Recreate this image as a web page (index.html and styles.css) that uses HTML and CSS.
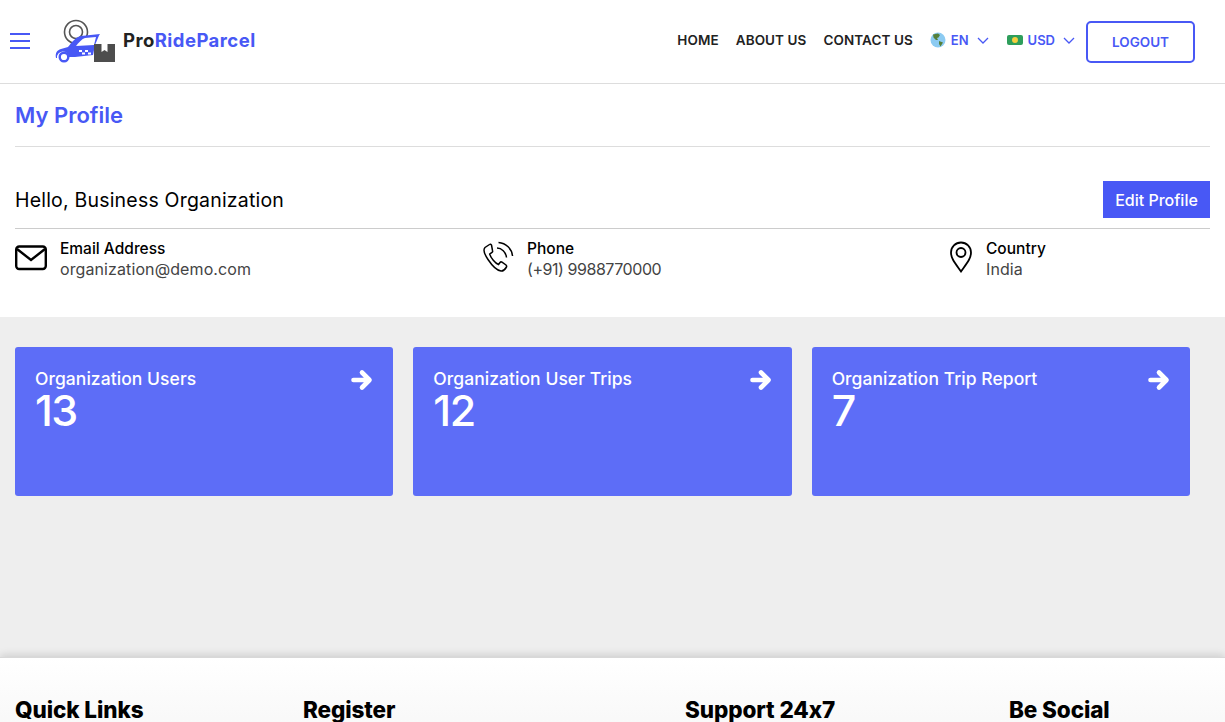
FILE: index.html
```html
<!DOCTYPE html>
<html lang="en">
<head>
<meta charset="utf-8">
<title>My Profile</title>
<link rel="stylesheet" href="styles.css">
</head>
<body>
<header class="topbar">
  <button class="burger" aria-label="Menu"><span></span><span></span><span></span></button>
  <a class="brand">
    <svg class="logo" width="62" height="50" viewBox="0 0 62 50">
      <g fill="none" stroke="#555" stroke-width="1.6"><circle cx="21" cy="15" r="11.500"/><circle cx="21" cy="15" r="6.500"/></g>
      <path d="M1 41C0 36 2 33 6 32l7-2c4-5 8-10 13-11l19-2-1 1.500-4 9.500-2 10-18 2h-6a6 6 0 0 0-12 1z" fill="#4858f5"/>
      <path d="M21 29c3-4 6-7 9-8l11-1-2 8z" fill="#fff"/>
      <circle cx="9" cy="40" r="4.300" fill="#fff" stroke="#4858f5" stroke-width="2.400"/>
      <path d="M24 33h3v2h-3zM30 33h3v2h-3zM27 35.500h3v2h-3zM33 35.500h3v2h-3z" fill="#fff"/>
      <rect x="39" y="27" width="21" height="18" fill="#4d4d4d"/>
      <path d="M46.500 27h6v8l-3-2-3 2z" fill="#fff"/>
    </svg>
    <span class="brand-name">Pro<em>RideParcel</em></span>
  </a>
  <nav class="nav">
    <a>HOME</a>
    <a>ABOUT US</a>
    <a>CONTACT US</a>
    <span class="pick">
      <svg width="16" height="16" viewBox="0 0 16 16"><circle cx="8" cy="8" r="7.500" fill="#8ccbf2"/><path d="M3 2.500 8 1.500l2 1.500-1.500 2.500-1.500.5L8 8 6 8 3.500 5.500zM9 9l4 1.500-2.500 4L9 12z" fill="#55803a"/></svg>
      <b>EN</b>
      <svg class="chev" width="12" height="7" viewBox="0 0 12 7"><path d="M1 1l5 5 5-5" fill="none" stroke="#4858f5" stroke-width="1.300"/></svg>
    </span>
    <span class="pick">
      <svg width="16" height="10" viewBox="0 0 16 10"><rect width="16" height="10" rx="2" fill="#2e9e5b"/><circle cx="8" cy="5" r="3" fill="#f5cf3e"/></svg>
      <b>USD</b>
      <svg class="chev" width="12" height="7" viewBox="0 0 12 7"><path d="M1 1l5 5 5-5" fill="none" stroke="#4858f5" stroke-width="1.300"/></svg>
    </span>
    <button class="logout">LOGOUT</button>
  </nav>
</header>

<main>
  <section class="profile">
    <h1 class="page-title">My Profile</h1>
    <div class="hello-row">
      <h2 class="hello">Hello, Business Organization</h2>
      <button class="edit">Edit Profile</button>
    </div>
    <div class="info-row">
      <div class="info">
        <svg class="info-icon" width="32" height="26" viewBox="0 0 32 26"><rect x="1.200" y="1.500" width="29.600" height="22.500" rx="3" fill="none" stroke="#000" stroke-width="2.400"/><path d="M2 4l14 11L30 4" fill="none" stroke="#000" stroke-width="2.400"/></svg>
        <div><div class="info-label">Email Address</div><div class="info-value">organization@demo.com</div></div>
      </div>
      <div class="info">
        <svg class="info-icon tall" width="32" height="32" viewBox="0 0 32 32"><path d="M7.500 3.500 3 6.500c-2 2-1 6 3 12s9 11 13 11.500c2 .3 4-1.500 5.500-4 .4-.8 0-1.500-.5-2l-4-2.800c-.8-.5-1.500-.3-2 .3l-1.500 2c-3-1-8-7-8.800-10.500l2.300-1.500c.7-.5.8-1.200.5-2L9.500 4c-.4-.7-1.300-1-2-.5z" fill="none" stroke="#000" stroke-width="1.500"/><path d="M15 7c4.500 0 9 4 9.500 9.500M16.500 1.500C24 2 30 8 30.500 15" fill="none" stroke="#000" stroke-width="1.500"/></svg>
        <div><div class="info-label">Phone</div><div class="info-value phone">(+91) 9988770000</div></div>
      </div>
      <div class="info info-country">
        <svg class="info-icon tall" width="24" height="32" viewBox="0 0 24 32"><path d="M12 30.500C6 22 2 17.500 2 11.500a10 10 0 0 1 20 0C22 17.500 18 22 12 30.500z" fill="none" stroke="#000" stroke-width="1.800"/><circle cx="12" cy="11.500" r="4.500" fill="none" stroke="#000" stroke-width="1.800"/></svg>
        <div><div class="info-label">Country</div><div class="info-value">India</div></div>
      </div>
    </div>
  </section>

  <section class="stats">
    <div class="stat-cell"><article class="card"><div class="card-top"><span class="card-name">Organization Users</span><svg class="arrow" width="22" height="22" viewBox="0 0 22 22"><path d="M2.500 11h15M11 3.500l7.500 7.500-7.500 7.500" fill="none" stroke="#fff" stroke-width="4.600" stroke-linecap="round" stroke-linejoin="round"/></svg></div><div class="card-num">13</div></article></div>
    <div class="stat-cell"><article class="card"><div class="card-top"><span class="card-name">Organization User Trips</span><svg class="arrow" width="22" height="22" viewBox="0 0 22 22"><path d="M2.500 11h15M11 3.500l7.500 7.500-7.500 7.500" fill="none" stroke="#fff" stroke-width="4.600" stroke-linecap="round" stroke-linejoin="round"/></svg></div><div class="card-num">12</div></article></div>
    <div class="stat-cell"><article class="card"><div class="card-top"><span class="card-name">Organization Trip Report</span><svg class="arrow" width="22" height="22" viewBox="0 0 22 22"><path d="M2.500 11h15M11 3.500l7.500 7.500-7.500 7.500" fill="none" stroke="#fff" stroke-width="4.600" stroke-linecap="round" stroke-linejoin="round"/></svg></div><div class="card-num">7</div></article></div>
  </section>
</main>

<footer class="footer">
  <h3>Quick Links</h3>
  <h3>Register</h3>
  <h3>Support 24x7</h3>
  <h3>Be Social</h3>
</footer>
</body>
</html>
```
FILE: styles.css
```css
* { box-sizing: border-box; }
html, body { margin: 0; height: 722px; overflow: hidden; }
body { font-family: Inter, "Liberation Sans", sans-serif; background: #fff; color: #000; }
h1, h2, h3 { margin: 0; }
button { font-family: inherit; cursor: pointer; }

.topbar { height: 84px; border-bottom: 1px solid #ddd; display: flex; align-items: center; padding: 0 30px 3px 10px; }
.burger { width: 20px; height: 16px; padding: 0; border: 0; background: none; display: flex; flex-direction: column; justify-content: space-between; margin-top: 2px; }
.burger span { display: block; height: 2px; background: #4858f5; }
.brand { display: flex; align-items: center; margin-left: 25px; }
.logo { display: block; margin-top: 3px; }
.brand-name { font-size: 18.500px; font-weight: 700; color: #222; margin-left: 6px; letter-spacing: .45px; }
.brand-name em { font-style: normal; color: #4858f5; }
.nav { margin-left: auto; display: flex; align-items: center; font-size: 13.500px; font-weight: 600; color: #222; }
.nav > a { margin-right: 17px; letter-spacing: .08px; }
.pick { display: flex; align-items: center; color: #4858f5; margin-right: 18px; font-size: 13px; }
.pick b { font-weight: 600; margin-left: 5px; }
.chev { margin-left: 8px; }
.pick + .pick { margin-right: 11px; }
.logout { width: 109px; height: 42px; border: 2px solid #4858f5; border-radius: 5px; background: #fff; color: #4858f5; font-size: 13.500px; font-weight: 600; margin-top: 4px; }

.profile { height: 233px; padding: 0 15px; background: #fff; }
.page-title { height: 63px; line-height: 63px; border-bottom: 1px solid #ddd; color: #4858f5; font-size: 22px; font-weight: 600; }
.hello-row { height: 82px; display: flex; align-items: center; justify-content: space-between; padding-top: 24px; border-bottom: 1px solid #ccc; }
.hello { font-size: 19.500px; font-weight: 400; letter-spacing: .2px; }
.edit { width: 107px; height: 37px; border: 0; background: #4858f5; color: #fff; font-size: 16px; font-weight: 500; padding: 0; }
.info-row { display: grid; grid-template-columns: 467px 467px 1fr; padding-top: 9px; }
.info { display: flex; align-items: flex-start; }
.info-icon { flex: none; margin-top: 7px; margin-right: 13px; }
.info-icon.tall { margin-top: 3px; }
.info-label { font-size: 15.500px; font-weight: 500; line-height: 21px; }
.info-value { font-size: 16px; color: #444; line-height: 21px; letter-spacing: .1px; }
.info-value.phone { letter-spacing: -.45px; }

.stats { height: 340px; background: #eee; padding: 30px 15px 0; display: grid; grid-template-columns: repeat(3, 398.330px); align-items: start; }
.stat-cell { padding-right: 20px; }
.card { height: 149px; background: #5d6df7; border-radius: 3px; padding: 20px; color: #fff; }
.card-top { display: flex; justify-content: space-between; align-items: center; height: 22px; }
.card-name { font-size: 17.500px; font-weight: 500; letter-spacing: .05px; }
.card-num { font-size: 43px; line-height: 44px; font-weight: 500; letter-spacing: -1.500px; margin-top: -1px; }
.arrow { display: block; margin-top: 3px; }

.footer { height: 300px; background: linear-gradient(#fff, #f9f9f9 60px, #fff); box-shadow: 0 -2px 8px rgba(0,0,0,.14); border-top: 1px solid #d8d8d8; display: grid; grid-template-columns: 288px 382px 324px 1fr; padding: 39px 15px 0; position: relative; }
.footer h3 { font-size: 22.500px; font-weight: 800; line-height: 26px; letter-spacing: -.1px; }
```
